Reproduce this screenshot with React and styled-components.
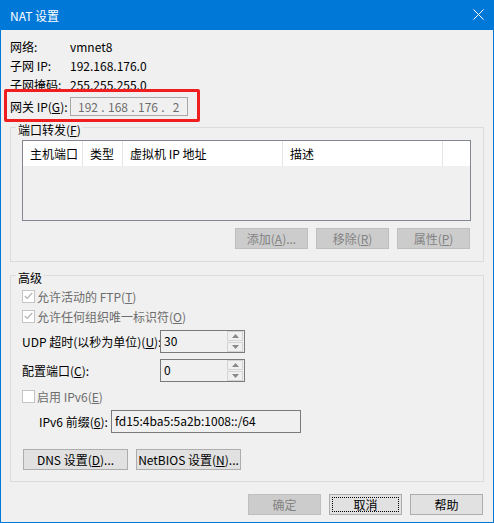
import React from "react";
import styled, { createGlobalStyle } from "styled-components";

const GlobalStyle = createGlobalStyle`
  html, body {
    margin: 0;
    padding: 0;
    background: #f0f0f0;
  }
  body {
    font-family: "Noto Sans CJK SC", "Noto Sans", sans-serif;
    font-size: 12px;
    color: #000;
  }
`;

const Window = styled.div`
  box-sizing: border-box;
  width: 494px;
  height: 523px;
  display: flex;
  flex-direction: column;
  background: #f0f0f0;
  border: 1px solid #0078d7;
  border-top: none;
`;

const TitleBar = styled.div`
  height: 30px;
  margin: 0 -1px;
  flex-shrink: 0;
  background: #0078d7;
  color: #fff;
  display: flex;
  align-items: center;
  justify-content: space-between;
  padding: 0 10px 0 10px;
  font-size: 12px;
`;

const CloseIcon = styled.svg`
  width: 11px;
  height: 11px;
  margin-top: -1px;
`;

const Body = styled.div`
  display: flex;
  flex-direction: column;
  padding: 0 9px;
`;

const InfoGrid = styled.div`
  display: grid;
  grid-template-columns: 60px auto;
  grid-auto-rows: 19px;
  align-items: center;
  margin-top: 7px;
  line-height: 19px;
`;

const GatewayRow = styled.div`
  position: relative;
  display: flex;
  align-items: center;
  height: 19px;
  margin-top: 3px;
`;

const Highlight = styled.div`
  position: absolute;
  left: -6px;
  top: -8px;
  width: 196px;
  height: 33px;
  box-sizing: border-box;
  border: 3px solid #f01e1e;
  border-radius: 2px;
  pointer-events: none;
`;

const Label = styled.span`
  box-sizing: border-box;
  width: ${(p) => p.$w || 60}px;
  flex-shrink: 0;
  color: ${(p) => (p.$disabled ? "#6d6d6d" : "#000")};
  padding-left: ${(p) => p.$indent || 0}px;
  white-space: nowrap;
`;

const Key = styled.u`
  text-decoration: underline;
  text-underline-offset: 1px;
`;

const IpField = styled.div`
  box-sizing: border-box;
  width: 118px;
  height: 19px;
  border: 1px solid #a8a8a8;
  background: #f0f0f0;
  color: #6d6d6d;
  display: flex;
  align-items: center;
  padding-left: 5px;
`;

const Octet = styled.span`
  width: ${(p) => p.$w}px;
  text-align: center;
`;

const Group = styled.fieldset`
  margin: ${(p) => p.$mt || 0}px 0 0;
  padding: 0 12px ${(p) => p.$pb}px 11px;
  border: 1px solid #dcdcdc;
  min-width: 0;
  display: flex;
  flex-direction: column;
`;

const GroupTitle = styled.legend`
  margin-left: -6px;
  padding: 6px 2px 0;
  line-height: 16px;
  font-size: 12px;
`;

const ListView = styled.div`
  margin-top: 2px;
  height: 81px;
  box-sizing: border-box;
  border: 1px solid #828790;
  background: #f0f0f0;
`;

const HeaderRow = styled.div`
  display: flex;
  height: 25px;
  background: #fff;
`;

const HeaderCell = styled.div`
  box-sizing: border-box;
  width: ${(p) => (p.$w ? `${p.$w}px` : "auto")};
  flex: ${(p) => (p.$w ? "0 0 auto" : "1")};
  border-right: ${(p) => (p.$w ? "1px solid #e5e5e5" : "none")};
  padding-left: 7px;
  line-height: 25px;
  white-space: nowrap;
`;

const ButtonRow = styled.div`
  display: flex;
  justify-content: ${(p) => p.$justify || "flex-end"};
  gap: 8px;
  margin-top: ${(p) => p.$mt || 0}px;
  margin-left: ${(p) => p.$ml || 0}px;
  margin-right: ${(p) => p.$mr || 0}px;
`;

const Button = styled.div`
  position: relative;
  box-sizing: border-box;
  width: ${(p) => p.$w || 73}px;
  height: 21px;
  display: flex;
  align-items: center;
  justify-content: center;
  background: ${(p) => (p.$disabled ? "#cccccc" : "#e1e1e1")};
  border: 1px solid ${(p) => (p.$disabled ? "#bfbfbf" : "#adadad")};
  color: ${(p) => (p.$disabled ? "#838383" : "#000")};
  white-space: nowrap;
  ${(p) =>
    p.$focused &&
    `
    &::after {
      content: "";
      position: absolute;
      inset: 2px;
      border: 1px dotted #000;
    }
  `}
`;

const CheckRow = styled.div`
  display: flex;
  align-items: center;
  height: 20px;
  margin-top: ${(p) => p.$mt || 0}px;
  color: #6d6d6d;
`;

const CheckBox = styled.span`
  box-sizing: border-box;
  width: 13px;
  height: 13px;
  border: 1px solid #c4c4c4;
  background: #fff;
  margin-right: 2px;
  display: flex;
  align-items: center;
  justify-content: center;
`;

const FieldRow = styled.div`
  display: flex;
  align-items: center;
  height: 23px;
  margin-top: ${(p) => p.$mt || 0}px;
`;

const Spin = styled.div`
  box-sizing: border-box;
  width: 85px;
  height: 23px;
  border: 1px solid #7a7a7a;
  background: #f0f0f0;
  display: flex;
  justify-content: space-between;
  padding: 0 1px 0 0;
`;

const SpinValue = styled.span`
  padding: 2px 0 0 3px;
  line-height: 16px;
`;

const SpinButtons = styled.div`
  display: flex;
  flex-direction: column;
  gap: 1px;
  padding: 0;
`;

const SpinButton = styled.div`
  box-sizing: border-box;
  width: 16px;
  height: 10px;
  border: 1px solid #d4d4d4;
  background: #f0f0f0;
  display: flex;
  align-items: center;
  justify-content: center;
`;

const TextField = styled.div`
  box-sizing: border-box;
  width: ${(p) => p.$w}px;
  height: 23px;
  border: 1px solid #7a7a7a;
  background: #f0f0f0;
  padding: 2px 0 0 3px;
  line-height: 16px;
`;

const Arrow = ({ up }) => (
  <svg width="7" height="4" viewBox="0 0 7 4">
    <path d={up ? "M0 4 L3.5 0 L7 4 Z" : "M0 0 L3.5 4 L7 0 Z"} fill="#8a8a8a" />
  </svg>
);

const SpinBox = ({ value }) => (
  <Spin>
    <SpinValue>{value}</SpinValue>
    <SpinButtons>
      <SpinButton>
        <Arrow up />
      </SpinButton>
      <SpinButton>
        <Arrow />
      </SpinButton>
    </SpinButtons>
  </Spin>
);

const Check = ({ checked, children, mt }) => (
  <CheckRow $mt={mt}>
    <CheckBox>
      {checked && (
        <svg width="9" height="8" viewBox="0 0 9 8">
          <path d="M0.8 4 L3.2 6.4 L8.2 1" fill="none" stroke="#b5b5b5" strokeWidth="1.3" />
        </svg>
      )}
    </CheckBox>
    {children}
  </CheckRow>
);

export default function App() {
  return (
    <>
      <GlobalStyle />
      <Window>
        <TitleBar>
          <span>NAT 设置</span>
          <CloseIcon viewBox="0 0 11 11">
            <path d="M0.5 0.5 L10.5 10.5 M10.5 0.5 L0.5 10.5" stroke="#fff" strokeWidth="1" />
          </CloseIcon>
        </TitleBar>
        <Body>
          <InfoGrid>
            <span>网络:</span>
            <span>vmnet8</span>
            <span>子网 IP:</span>
            <span>192.168.176.0</span>
            <span>子网掩码:</span>
            <span>255.255.255.0</span>
          </InfoGrid>
          <GatewayRow>
            <Label>
              网关 IP(<Key>G</Key>):
            </Label>
            <IpField>
              <Octet $w={24}>192</Octet>
              <Octet $w={6}>.</Octet>
              <Octet $w={24}>168</Octet>
              <Octet $w={6}>.</Octet>
              <Octet $w={24}>176</Octet>
              <Octet $w={6}>.</Octet>
              <Octet $w={20}>2</Octet>
            </IpField>
            <Highlight />
          </GatewayRow>

          <Group $pb={12}>
            <GroupTitle>
              端口转发(<Key>F</Key>)
            </GroupTitle>
            <ListView>
              <HeaderRow>
                <HeaderCell $w={60}>主机端口</HeaderCell>
                <HeaderCell $w={40}>类型</HeaderCell>
                <HeaderCell $w={160}>虚拟机 IP 地址</HeaderCell>
                <HeaderCell $w={160}>描述</HeaderCell>
                <HeaderCell />
              </HeaderRow>
            </ListView>
            <ButtonRow $mt={7} $mr={1}>
              <Button $disabled>
                添加(<Key>A</Key>)...
              </Button>
              <Button $disabled>
                移除(<Key>R</Key>)
              </Button>
              <Button $disabled>
                属性(<Key>P</Key>)
              </Button>
            </ButtonRow>
          </Group>

          <Group $mt={2} $pb={11}>
            <GroupTitle>高级</GroupTitle>
            <Check checked mt={0}>
              允许活动的 FTP(<Key>T</Key>)
            </Check>
            <Check checked>
              允许任何组织唯一标识符(<Key>O</Key>)
            </Check>
            <FieldRow $mt={4}>
              <Label $w={138}>
                UDP 超时(以秒为单位)(<Key>U</Key>):
              </Label>
              <SpinBox value="30" />
            </FieldRow>
            <FieldRow $mt={6}>
              <Label $w={138}>
                配置端口(<Key>C</Key>):
              </Label>
              <SpinBox value="0" />
            </FieldRow>
            <Check mt={4}>
              启用 IPv6(<Key>E</Key>)
            </Check>
            <FieldRow $mt={4}>
              <Label $w={89} $indent={17}>
                IPv6 前缀(<Key>6</Key>):
              </Label>
              <TextField $w={190}>fd15:4ba5:5a2b:1008::/64</TextField>
            </FieldRow>
            <ButtonRow $mt={16} $ml={1} $justify="flex-start">
              <Button $w={105}>
                DNS 设置(<Key>D</Key>)...
              </Button>
              <Button $w={105}>
                NetBIOS 设置(<Key>N</Key>)...
              </Button>
            </ButtonRow>
          </Group>

          <ButtonRow $mt={12} $mr={1}>
            <Button $disabled>确定</Button>
            <Button $focused>取消</Button>
            <Button>帮助</Button>
          </ButtonRow>
        </Body>
      </Window>
    </>
  );
}
